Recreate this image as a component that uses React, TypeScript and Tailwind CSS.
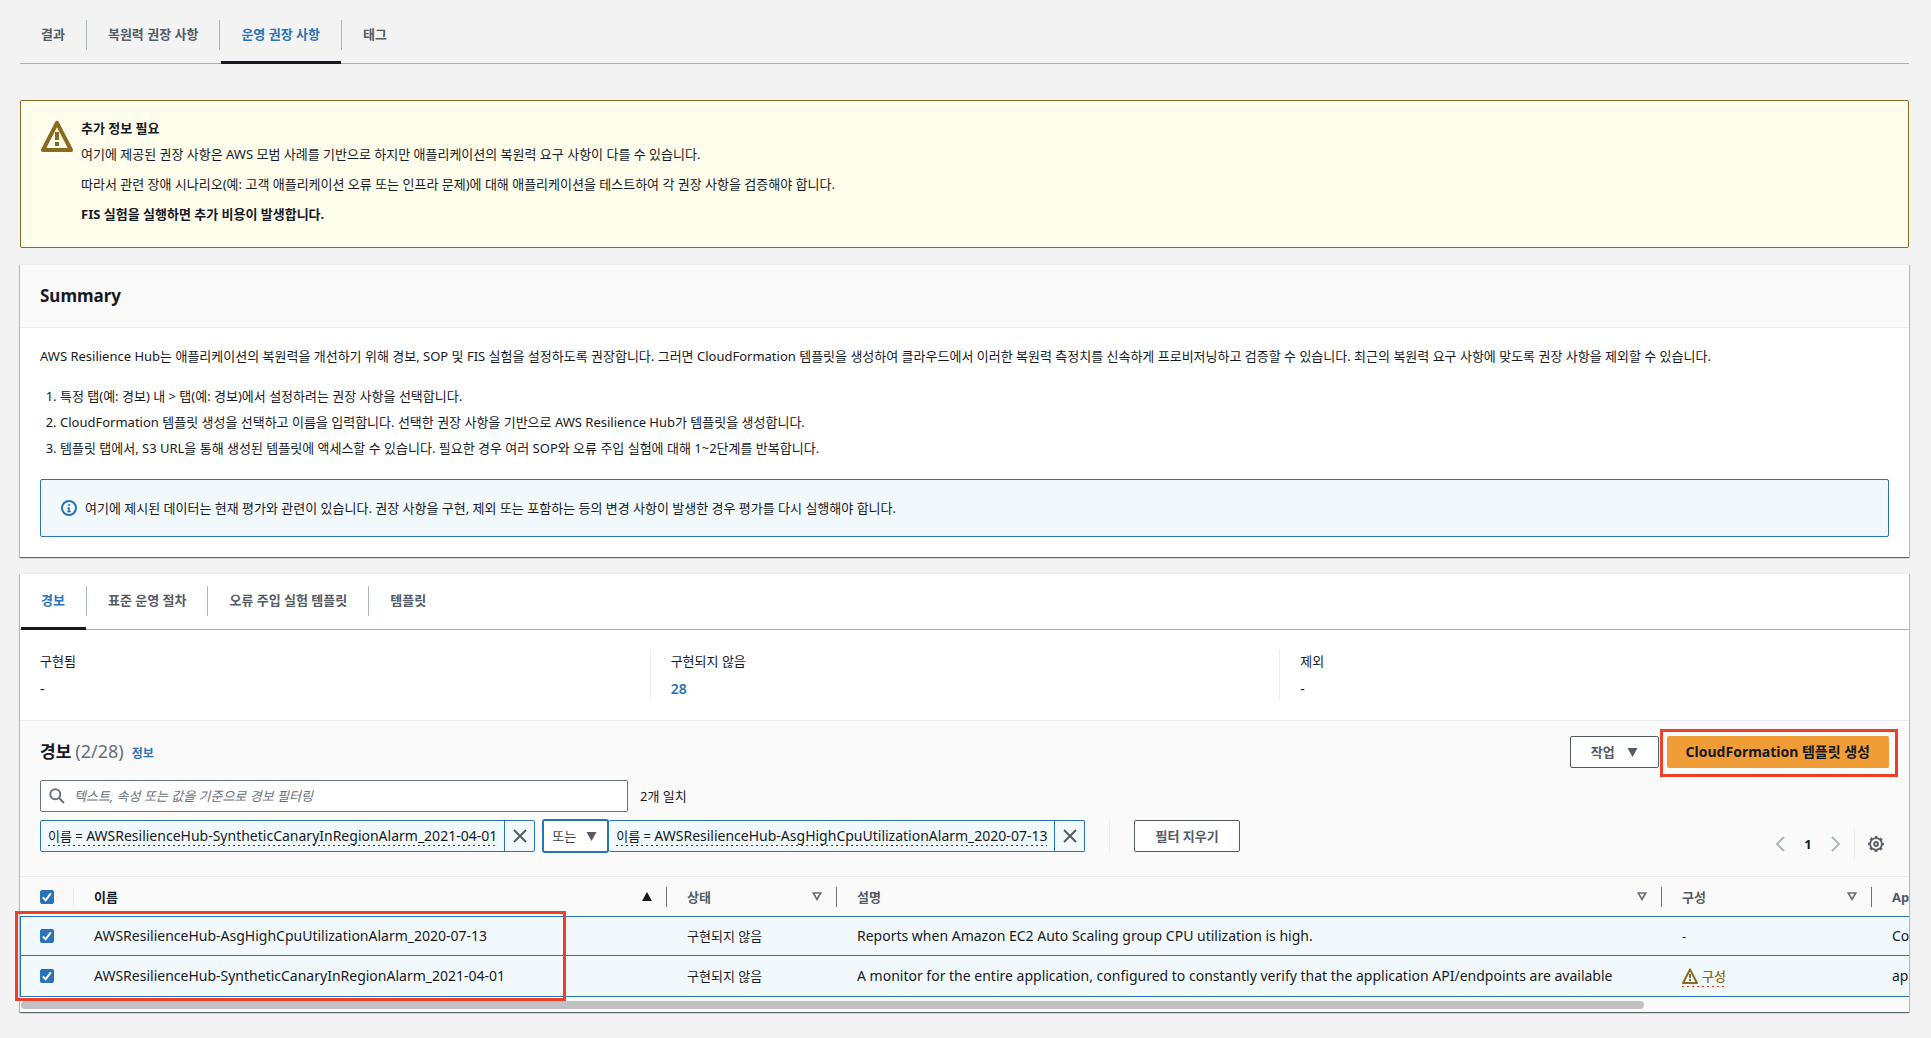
import type { ReactNode } from 'react';

function WarningIcon({ className }: { className: string }) {
  return (
    <svg viewBox="0 0 16 16" className={className} fill="none" stroke="currentColor" strokeWidth="2" strokeLinejoin="round" aria-hidden="true">
      <path d="M8 1.4 15 15H1L8 1.4Z" />
      <path d="M8 6v4M8 11v2" />
    </svg>
  );
}

function InfoIcon() {
  return (
    <svg viewBox="0 0 16 16" className="h-4 w-4 shrink-0 text-[#2a73b9]" fill="none" stroke="currentColor" strokeWidth="2" aria-hidden="true">
      <circle cx="8" cy="8" r="7" />
      <path d="M8 11V8H6.5M6.2 11.5h3.6M8 4v2" strokeWidth="1.6" />
    </svg>
  );
}

function SearchIcon() {
  return (
    <svg viewBox="0 0 16 16" className="h-4 w-4 shrink-0 text-[#6b727a]" fill="none" stroke="currentColor" strokeWidth="2" aria-hidden="true">
      <circle cx="6.3" cy="6.3" r="5" />
      <path d="m10 10 5 5" />
    </svg>
  );
}

function CloseIcon() {
  return (
    <svg viewBox="0 0 16 16" className="h-4 w-4" fill="none" stroke="#545b64" strokeWidth="2" aria-hidden="true">
      <path d="m2 2 12 12M14 2 2 14" />
    </svg>
  );
}

function CaretDown() {
  return (
    <svg viewBox="0 0 10 9" className="h-[9px] w-[11px]" fill="#545b64" aria-hidden="true">
      <path d="M0 0h10L5 9Z" />
    </svg>
  );
}

function SortIcon({ active }: { active?: boolean }) {
  return active ? (
    <svg viewBox="0 0 10 9" className="h-[9px] w-[10px]" fill="#16191f" aria-hidden="true">
      <path d="M0 9h10L5 0Z" />
    </svg>
  ) : (
    <svg viewBox="0 0 10 9" className="h-[9px] w-[10px]" fill="none" stroke="#687078" strokeWidth="1.7" aria-hidden="true">
      <path d="M1.3 1h7.4L5 7.4Z" />
    </svg>
  );
}

function Chevron({ left }: { left?: boolean }) {
  return (
    <svg viewBox="0 0 10 16" className="h-4 w-[10px]" fill="none" stroke="#aab7b8" strokeWidth="2" aria-hidden="true">
      <path d={left ? 'M9 1 2 8l7 7' : 'm1 1 7 7-7 7'} />
    </svg>
  );
}

function GearIcon() {
  return (
    <svg viewBox="0 0 16 16" className="h-4 w-4 text-[#545b64]" fill="none" stroke="currentColor" aria-hidden="true">
      <circle cx="8" cy="8" r="5.9" strokeWidth="1.8" />
      <circle cx="8" cy="8" r="7.1" strokeWidth="1.6" strokeDasharray="2.8 2.776" strokeDashoffset="1.4" />
      <circle cx="8" cy="8" r="2" strokeWidth="1.8" />
    </svg>
  );
}

function Checkbox({ label }: { label: string }) {
  return (
    <span className="relative block h-[14px] w-[14px]">
      <input type="checkbox" defaultChecked aria-label={label} className="peer block h-[14px] w-[14px] appearance-none rounded-[2px] border border-[#687078] bg-white checked:border-[#2a73b9] checked:bg-[#2a73b9]" />
      <svg viewBox="0 0 14 14" className="pointer-events-none absolute inset-0 hidden peer-checked:block" fill="none" stroke="#fff" strokeWidth="2" aria-hidden="true">
        <path d="m2.8 7.4 2.9 2.9L10.8 3.4" />
      </svg>
    </span>
  );
}

function Tabs({ items, active, className }: { items: string[]; active: number; className: string }) {
  return (
    <div role="tablist" className={`flex border-b border-[#a7b4b5] pb-[13px] ${className}`}>
      {items.map((label, i) => (
        <div key={label} className={`relative flex h-[30px] ${i < items.length - 1 ? 'border-r border-[#aab7b8]' : ''}`}>
          <button role="tab" aria-selected={i === active} className={`px-[21px] pb-0.5 text-[13px] leading-[22px] font-bold ${i === active ? 'text-[#2a73b9]' : 'text-[#545b64]'}`}>
            {label}
          </button>
          {i === active && <span className="absolute right-0 -bottom-[14px] left-px h-[3px] bg-[#16191f]" />}
        </div>
      ))}
    </div>
  );
}

function Token({ property, children, joined }: { property: string; children: ReactNode; joined?: boolean }) {
  return (
    <div className={`flex h-8 items-stretch rounded-[2px] border border-[#2a73b9] bg-[#f1f9fc] ${joined ? 'border-l-0' : ''}`}>
      <button className="px-[7px] text-[14px]">
        <span className="block bg-[repeating-linear-gradient(90deg,#3a4048_0_2px,transparent_2px_5px)] bg-[length:100%_1px] bg-bottom bg-no-repeat pb-px leading-[18px] whitespace-nowrap">
          <span className="text-[13px]">{property} = </span>
          {children}
        </span>
      </button>
      <button aria-label="필터 제거" className="flex w-[30px] items-center justify-center border-l border-[#2a73b9]">
        <CloseIcon />
      </button>
    </div>
  );
}

const shadow = 'shadow-[0_1px_1px_0_rgba(0,28,36,0.45),1px_1px_1px_0_rgba(0,28,36,0.2),-1px_1px_1px_0_rgba(0,28,36,0.2)]';

const columns = [
  { label: '이름', active: true },
  { label: '상태' },
  { label: '설명' },
  { label: '구성' },
];

const rows = [
  {
    name: 'AWSResilienceHub-AsgHighCpuUtilizationAlarm_2020-07-13',
    description: 'Reports when Amazon EC2 Auto Scaling group CPU utilization is high.',
    configure: false,
    component: 'ComputeAppComponent',
  },
  {
    name: 'AWSResilienceHub-SyntheticCanaryInRegionAlarm_2021-04-01',
    description: 'A monitor for the entire application, configured to constantly verify that the application API/endpoints are available',
    configure: true,
    component: 'appcommon',
  },
];

export default function App() {
  return (
    <main className="min-h-screen bg-[#f3f3f3] pr-[22px] pb-6 pl-5 font-['Noto_Sans','Noto_Sans_CJK_KR',sans-serif] text-[13px] leading-[22px] text-[#16191f]">
      <Tabs items={['결과', '복원력 권장 사항', '운영 권장 사항', '태그']} active={2} className="pt-5" />

      <section className="mt-9 flex gap-2 rounded-[2px] border border-[#886a20] bg-[#fffdeb] px-5 pt-[14px] pb-5 leading-[26px]">
        <WarningIcon className="mt-[5px] h-8 w-8 shrink-0 text-[#886a20]" />
        <div>
          <h2 className="font-bold">추가 정보 필요</h2>
          <div className="flex flex-col gap-1">
            <p>여기에 제공된 권장 사항은 AWS 모범 사례를 기반으로 하지만 애플리케이션의 복원력 요구 사항이 다를 수 있습니다.</p>
            <p>따라서 관련 장애 시나리오(예: 고객 애플리케이션 오류 또는 인프라 문제)에 대해 애플리케이션을 테스트하여 각 권장 사항을 검증해야 합니다.</p>
            <p className="font-bold">FIS 실험을 실행하면 추가 비용이 발생합니다.</p>
          </div>
        </div>
      </section>

      <section className={`mt-4 border-t border-[#eaeded] bg-white ${shadow}`}>
        <header className="border-b border-[#eaeded] bg-[#fafafa] px-5 py-5">
          <h2 className="text-[17px] leading-[22px] font-bold">Summary</h2>
        </header>
        <div className="px-5 pt-[15px] pb-5 leading-[26px]">
          <p>AWS Resilience Hub는 애플리케이션의 복원력을 개선하기 위해 경보, SOP 및 FIS 실험을 설정하도록 권장합니다. 그러면 CloudFormation 템플릿을 생성하여 클라우드에서 이러한 복원력 측정치를 신속하게 프로비저닝하고 검증할 수 있습니다. 최근의 복원력 요구 사항에 맞도록 권장 사항을 제외할 수 있습니다.</p>
          <ol className="mt-[14px] list-decimal pl-5">
            <li>특정 탭(예: 경보) 내 &gt; 탭(예: 경보)에서 설정하려는 권장 사항을 선택합니다.</li>
            <li>CloudFormation 템플릿 생성을 선택하고 이름을 입력합니다. 선택한 권장 사항을 기반으로 AWS Resilience Hub가 템플릿을 생성합니다.</li>
            <li>템플릿 탭에서, S3 URL을 통해 생성된 템플릿에 액세스할 수 있습니다. 필요한 경우 여러 SOP와 오류 주입 실험에 대해 1~2단계를 반복합니다.</li>
          </ol>
          <div className="mt-[18px] flex items-center gap-2 rounded-[2px] border border-[#2a73b9] bg-[#f1f9fc] px-5 py-[15px]">
            <InfoIcon />
            <p>여기에 제시된 데이터는 현재 평가와 관련이 있습니다. 권장 사항을 구현, 제외 또는 포함하는 등의 변경 사항이 발생한 경우 평가를 다시 실행해야 합니다.</p>
          </div>
        </div>
      </section>

      <section className={`relative mt-4 border-t border-[#eaeded] bg-[#fafafa] ${shadow}`}>
        <div className="bg-white">
          <Tabs items={['경보', '표준 운영 절차', '오류 주입 실험 템플릿', '템플릿']} active={0} className="pt-3" />
          <dl className="grid grid-cols-3 border-b border-[#eaeded] py-5">
            <div className="flex flex-col gap-[6px] px-5">
              <dt>구현됨</dt>
              <dd className="text-[14px]">-</dd>
            </div>
            <div className="flex flex-col gap-[6px] border-l border-[#eaeded] px-5">
              <dt>구현되지 않음</dt>
              <dd className="text-[14px]"><a href="#not-implemented" className="font-semibold text-[#2a73b9]">28</a></dd>
            </div>
            <div className="flex flex-col gap-[6px] border-l border-[#eaeded] px-5">
              <dt>제외</dt>
              <dd className="text-[14px]">-</dd>
            </div>
          </dl>
        </div>

        <div className="px-5 pt-[15px] pb-4">
          <div className="flex h-8 items-center justify-between">
            <h2 className="flex items-baseline text-[17px] font-bold">
              경보<span className="ml-1 text-[18px] font-normal text-[#687078]">(2/28)</span>
              <a href="#info" className="ml-2 text-[12px] text-[#2a73b9]">정보</a>
            </h2>
            <div className="flex gap-2">
              <button className="flex h-8 items-center gap-3 rounded-[2px] border border-[#545b64] bg-white px-5 font-bold text-[#545b64]">
                작업
                <CaretDown />
              </button>
              <div className="relative">
                <button className="h-8 rounded-[2px] bg-[#f09d37] px-[19px] text-[14px] font-bold">CloudFormation 템플릿 생성</button>
                <span className="pointer-events-none absolute -top-[7px] -right-[9px] -bottom-[9px] -left-[7px] border-[3px] border-[#ec4128]" />
              </div>
            </div>
          </div>

          <div className="mt-3 flex h-20 items-start justify-between">
            <div className="flex flex-col gap-2">
              <div className="flex items-center gap-3">
                <label className="flex h-8 w-[588px] items-center gap-[9px] rounded-[2px] border border-[#687078] bg-white px-2">
                  <SearchIcon />
                  <input type="search" aria-label="경보 필터링" placeholder="텍스트, 속성 또는 값을 기준으로 경보 필터링" className="min-w-0 flex-1 outline-none placeholder:text-[#687078] placeholder:italic" />
                </label>
                <span>2개 일치</span>
              </div>
              <div className="flex items-center">
                <Token property="이름">AWSResilienceHub-SyntheticCanaryInRegionAlarm_2021-04-01</Token>
                <div className="relative -my-px ml-[7px] flex items-center">
                  <select aria-label="필터 연산자" className="h-[34px] w-[67px] appearance-none rounded-[3px] border-2 border-[#2a73b9] bg-white px-2 text-[#3a4048]">
                    <option>또는</option>
                    <option>및</option>
                  </select>
                  <span className="pointer-events-none absolute right-3"><CaretDown /></span>
                </div>
                <Token property="이름" joined>AWSResilienceHub-AsgHighCpuUtilizationAlarm_2020-07-13</Token>
                <div className="ml-6 h-8 border-l border-[#eaeded] pl-6">
                  <button className="h-8 rounded-[2px] border border-[#545b64] bg-white px-5 font-bold text-[#545b64]">필터 지우기</button>
                </div>
              </div>
            </div>
            <nav aria-label="페이지" className="flex h-8 items-center self-end pr-[5px]">
              <button aria-label="이전 페이지"><Chevron left /></button>
              <button aria-current="page" className="w-[46px] text-center font-bold">1</button>
              <button aria-label="다음 페이지"><Chevron /></button>
              <span className="ml-[13px] flex h-8 items-center border-l border-[#eaeded] pl-[13px]">
                <button aria-label="기본 설정"><GearIcon /></button>
              </span>
            </nav>
          </div>
        </div>

        <div className="relative">
          <div className="overflow-hidden">
            <table className="w-[2192px] table-fixed border-separate border-spacing-0 text-left">
              <colgroup>
                <col className="w-[54px]" />
                <col className="w-[593px]" />
                <col className="w-[170px]" />
                <col className="w-[825px]" />
                <col className="w-[210px]" />
                <col />
              </colgroup>
              <thead>
                <tr className="h-10 text-[#545b64]">
                  <th className="border-t border-[#eaeded] p-0">
                    <div className="flex h-5 items-center border-r border-[#eaeded] pl-5"><Checkbox label="모두 선택" /></div>
                  </th>
                  {columns.map((c) => (
                    <th key={c.label} aria-sort={c.active ? 'ascending' : undefined} className={`border-t border-[#eaeded] p-0 ${c.active ? 'text-[#16191f]' : ''}`}>
                      <div className="flex h-5 items-center justify-between border-r border-[#687078] pr-[14px] pl-5">
                        {c.label}
                        <button aria-label={`${c.label} 정렬`}><SortIcon active={c.active} /></button>
                      </div>
                    </th>
                  ))}
                  <th className="border-t border-[#eaeded] py-0 pr-0 pl-5">AppComponent</th>
                </tr>
              </thead>
              <tbody>
                {rows.map((r, i) => (
                  <tr key={r.name} className={`bg-[#f1f9fc] [&>td]:border-t [&>td]:border-[#2a73b9] [&>td]:py-0 [&>td]:pr-0 [&>td]:pl-5 ${i === rows.length - 1 ? 'h-[42px] [&>td]:border-b' : 'h-[39px]'}`}>
                    <td className="shadow-[inset_1px_0_0_#2a73b9]"><Checkbox label={r.name} /></td>
                    <td className="text-[14px]">{r.name}</td>
                    <td>구현되지 않음</td>
                    <td className="text-[14px]">{r.description}</td>
                    <td>
                      {r.configure ? (
                        <button className="flex items-center gap-1 bg-[repeating-linear-gradient(90deg,#d13212_0_2px,transparent_2px_5px)] bg-[length:100%_1px] bg-bottom bg-no-repeat pb-px leading-[20px] font-medium text-[#886a20]">
                          <WarningIcon className="h-4 w-4" />
                          구성
                        </button>
                      ) : (
                        '-'
                      )}
                    </td>
                    <td className="text-[14px]">{r.component}</td>
                  </tr>
                ))}
              </tbody>
            </table>
          </div>
          <span className="pointer-events-none absolute top-[35px] -bottom-[4px] -left-[5px] w-[551px] border-[3px] border-[#ec4128]" />
        </div>
        <div className="px-px pt-1 pb-[3px]">
          <div className="h-2 w-[86%] rounded-full bg-[#c1c1c1]" />
        </div>
      </section>
    </main>
  );
}
